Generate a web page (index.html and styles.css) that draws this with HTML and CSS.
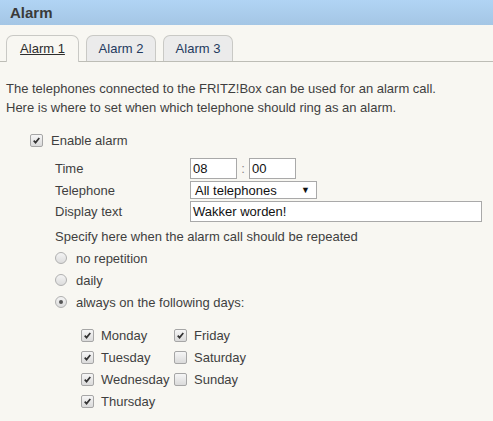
FILE: index.html
```html
<!DOCTYPE html>
<html>
<head>
<meta charset="utf-8">
<link rel="stylesheet" href="styles.css">
</head>
<body>
<header class="title">Alarm</header>
<nav class="tabs">
  <span class="tab active">Alarm 1</span>
  <span class="tab">Alarm 2</span>
  <span class="tab">Alarm 3</span>
</nav>
<main class="content">
  <p class="intro">The telephones connected to the FRITZ!Box can be used for an alarm call.<br>Here is where to set when which telephone should ring as an alarm.</p>
  <div class="row enable">
    <span class="cb"><svg viewBox="0 0 13 13"><path d="M3.2 6.6 L5.4 9 L9.8 3.6" fill="none" stroke="#333" stroke-width="2"/></svg></span>
    <span>Enable alarm</span>
  </div>
  <div class="settings">
    <div class="fields">
      <span class="lbl">Time</span>
      <div class="time">
        <span class="inp small">08</span>
        <span class="colon">:</span>
        <span class="inp small">00</span>
      </div>
      <span class="lbl">Telephone</span>
      <div class="sel"><span>All telephones</span><span class="arrow">▼</span></div>
      <span class="lbl">Display text</span>
      <span class="inp wide">Wakker worden!</span>
    </div>
    <p class="specify">Specify here when the alarm call should be repeated</p>
    <div class="row radio-row"><span class="rb"></span><span>no repetition</span></div>
    <div class="row radio-row"><span class="rb"></span><span>daily</span></div>
    <div class="row radio-row"><span class="rb on"></span><span>always on the following days:</span></div>
    <div class="days">
      <div class="row day"><span class="cb"><svg viewBox="0 0 13 13"><path d="M3.2 6.6 L5.4 9 L9.8 3.6" fill="none" stroke="#333" stroke-width="2"/></svg></span><span>Monday</span></div>
      <div class="row day"><span class="cb"><svg viewBox="0 0 13 13"><path d="M3.2 6.6 L5.4 9 L9.8 3.6" fill="none" stroke="#333" stroke-width="2"/></svg></span><span>Tuesday</span></div>
      <div class="row day"><span class="cb"><svg viewBox="0 0 13 13"><path d="M3.2 6.6 L5.4 9 L9.8 3.6" fill="none" stroke="#333" stroke-width="2"/></svg></span><span>Wednesday</span></div>
      <div class="row day"><span class="cb"><svg viewBox="0 0 13 13"><path d="M3.2 6.6 L5.4 9 L9.8 3.6" fill="none" stroke="#333" stroke-width="2"/></svg></span><span>Thursday</span></div>
      <div class="row day"><span class="cb"><svg viewBox="0 0 13 13"><path d="M3.2 6.6 L5.4 9 L9.8 3.6" fill="none" stroke="#333" stroke-width="2"/></svg></span><span>Friday</span></div>
      <div class="row day"><span class="cb"></span><span>Saturday</span></div>
      <div class="row day"><span class="cb"></span><span>Sunday</span></div>
    </div>
  </div>
</main>
</body>
</html>
```

FILE: styles.css
```css
html, body {
  margin: 0;
  padding: 0;
  background: #f8f7f2;
  height: 100%;
}
body {
  font-family: "Liberation Sans", Arial, sans-serif;
  font-size: 13px;
  color: #3f3f3f;
}
.title {
  height: 25px;
  line-height: 25px;
  padding-left: 10px;
  font-size: 15px;
  font-weight: bold;
  color: #3a3a3a;
  background: linear-gradient(#b1d4f4, #a4c6e5);
}
.tabs {
  display: flex;
  gap: 7px;
  padding-left: 6px;
  margin-top: 10px;
  border-bottom: 1px solid #bdbdb6;
  height: 26px;
}
.tab {
  box-sizing: border-box;
  width: 70px;
  height: 26px;
  line-height: 25px;
  text-align: center;
  border: 1px solid #c9c9c5;
  border-bottom: none;
  border-radius: 7px 7px 0 0;
  background: #ebebeb;
  color: #243a5e;
}
.tab.active {
  width: 73px;
  height: 27px;
  background: #f8f7f2;
  color: #2d2d2d;
  text-decoration: underline;
}
.content {
  padding-left: 6px;
}
.intro {
  margin: 17px 0 0;
  line-height: 19px;
}
.row {
  display: flex;
  align-items: center;
  height: 22px;
}
.enable {
  margin-top: 12px;
  padding-left: 24px;
  gap: 8px;
}
.cb {
  box-sizing: border-box;
  width: 13px;
  height: 13px;
  border: 1px solid #a6a6a6;
  border-radius: 2px;
  background: linear-gradient(#f6f6f6, #dadada);
  display: inline-flex;
  flex: none;
}
.cb svg {
  width: 11px;
  height: 11px;
}
.settings {
  padding-left: 49px;
}
.fields {
  margin-top: 6px;
  display: grid;
  grid-template-columns: 135px auto;
  grid-template-rows: 22px 18px 21px;
  row-gap: 2px;
  align-items: center;
}
.time {
  display: flex;
  align-items: center;
  height: 22px;
}
.inp {
  box-sizing: border-box;
  display: block;
  height: 21px;
  line-height: 19px;
  border: 1px solid #a9a9a9;
  background: #fff;
  color: #111;
  padding-left: 2px;
}
.inp.small {
  width: 47px;
}
.inp.wide {
  width: 292px;
}
.colon {
  width: 12px;
  text-align: center;
  color: #888;
}
.sel {
  box-sizing: border-box;
  width: 127px;
  height: 18px;
  border: 1px solid #a9a9a9;
  background: #fff;
  color: #111;
  display: flex;
  align-items: center;
  justify-content: space-between;
  padding: 0 6px 0 4px;
}
.arrow {
  font-size: 9px;
  color: #111;
}
.specify {
  margin: 5px 0 1px;
  line-height: 19px;
}
.radio-row {
  gap: 9px;
}
.rb {
  box-sizing: border-box;
  width: 12px;
  height: 12px;
  border-radius: 50%;
  border: 1px solid #b0b0b0;
  background: linear-gradient(#f4f4f4, #dcdcdc);
  display: inline-flex;
  align-items: center;
  justify-content: center;
  flex: none;
}
.rb.on::after {
  content: "";
  width: 4px;
  height: 4px;
  border-radius: 50%;
  background: #555;
}
.days {
  margin-top: 11px;
  padding-left: 26px;
  display: grid;
  grid-auto-flow: column;
  grid-template-rows: repeat(4, 22px);
  grid-template-columns: 93px auto;
}
.day {
  gap: 7px;
}
```
